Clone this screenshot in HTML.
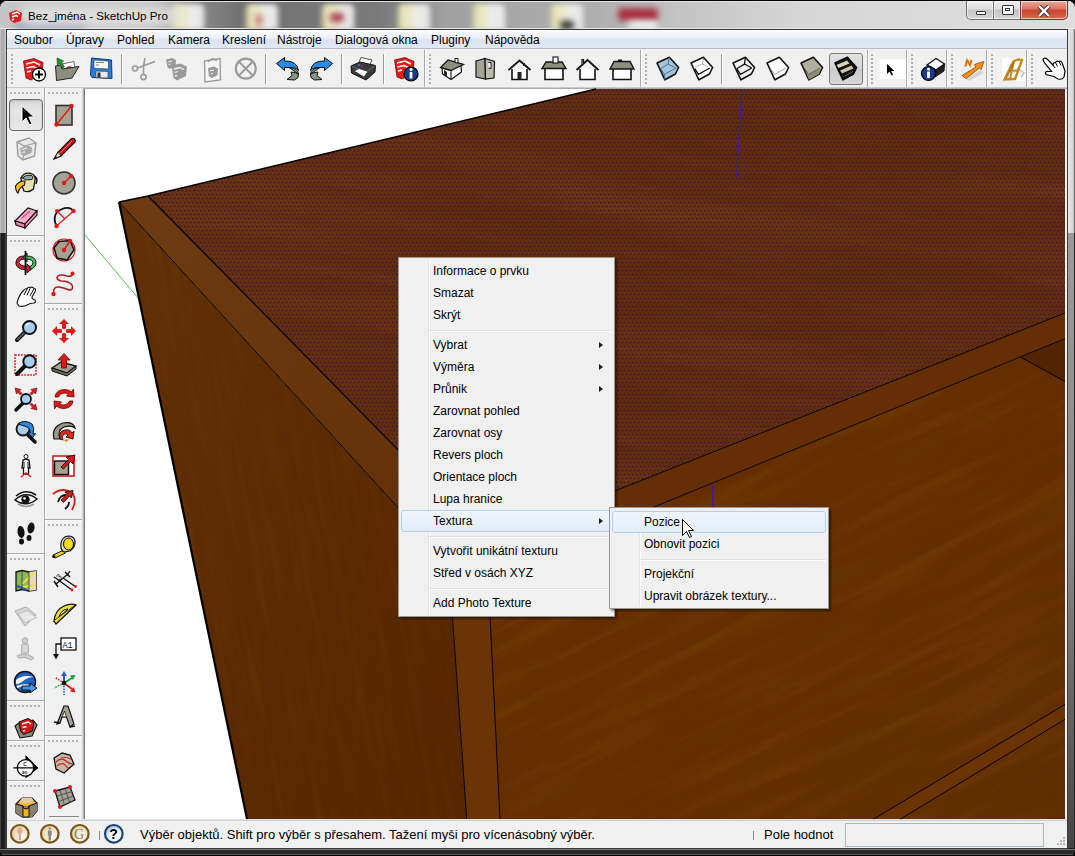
<!DOCTYPE html>
<html><head><meta charset="utf-8">
<style>
*{margin:0;padding:0;box-sizing:border-box}
html,body{width:1075px;height:856px;overflow:hidden;background:#000}
body{font-family:"Liberation Sans",sans-serif;font-size:12px;color:#000;position:relative}
.abs{position:absolute}
#frame{position:absolute;left:0;top:0;width:1075px;height:856px;border-radius:7px 7px 6px 6px;background:#2a2a2a;overflow:hidden}
#title{position:absolute;left:0;top:0;width:1075px;height:29px;overflow:hidden;border-radius:7px 7px 0 0;border-top:1px solid #000;background:linear-gradient(90deg,#c6c6c6 0,#bcbcbc 150px,#8a8a8a 195px,#727272 240px,#7a7a7a 380px,#a0a0a0 445px,#a8a8a8 520px,#b0b0b0 600px,#c4c4c4 680px,#d6d6d6 800px,#dedede 1075px)}
#client{position:absolute;left:6px;top:29px;width:1062px;height:820px;background:#f0f0f0;border:1px solid #3a3a3a}
#menubar{position:absolute;left:7px;top:30px;width:1060px;height:19px;
 background:linear-gradient(180deg,#fbfcfe 0,#eaeff8 45%,#dce4f2 55%,#dfe7f5 100%);border-bottom:1px solid #b6bcc6}
#menubar span{position:absolute;top:3px;font-size:12px;line-height:14px;color:#000}
#toolbar{position:absolute;left:7px;top:49px;width:1060px;height:39px;background:#f0f0f0;border-bottom:1px solid #c9c9c9}
#lefttb{position:absolute;left:7px;top:88px;width:77px;height:732px;background:#f0f0f0}
#view{position:absolute;left:83px;top:88px;width:984px;height:732px;background:#f0f0f0}
#status{position:absolute;left:7px;top:820px;width:1060px;height:28px;background:#f0f0f0;border-top:1px solid #d0d0d0}
.menu{position:absolute;background:#f0f0f0;border:1px solid #979797;box-shadow:2px 2px 2px rgba(0,0,0,.45)}
.menu .it{position:absolute;left:34px;font-size:12px;line-height:14px;color:#000;white-space:nowrap}
.menu .gut{position:absolute;top:2px;bottom:2px;width:2px;border-left:1px solid #e2e3e3;border-right:1px solid #fff}
.menu .sep{position:absolute;height:2px;border-top:1px solid #e0e0e0;border-bottom:1px solid #fff}
.menu .hl{position:absolute;height:22px;border:1px solid #aecff7;border-radius:3px;background:linear-gradient(180deg,#f1f5fb 0,#e3ecf8 100%)}
.arr{position:absolute;width:0;height:0;border-top:3.5px solid transparent;border-bottom:3.5px solid transparent;border-left:4px solid #1a1a1a}

.blob{position:absolute;top:3px;width:37px;height:26px;filter:blur(2.5px);background:linear-gradient(90deg,rgba(232,226,184,0) 0,#e8e2b8 18%,#ece8c8 40%,#ececec 60%,#e6e6e6 90%,rgba(230,230,230,0) 100%);border-radius:8px 8px 0 0}
.blob2{position:absolute;filter:blur(3px);border-radius:4px}
.glow{position:absolute;left:20px;top:4px;width:160px;height:22px;background:rgba(235,235,235,.7);filter:blur(6px);border-radius:10px}
#capbtns{position:absolute;left:966px;top:0px;width:102px;height:19px}
.cb{position:absolute;top:0;height:19px;border:1px solid #6e6e6e;border-top:none;background:linear-gradient(180deg,#efefef 0,#dcdcdc 45%,#c4c4c4 50%,#d6d6d6 100%);box-shadow:inset 0 0 0 1px rgba(255,255,255,.6)}
.cb.close{background:linear-gradient(180deg,#e9a99a 0,#d9735e 45%,#c8432a 50%,#d86a50 100%);border-color:#6e3a34}

.ic{position:absolute;overflow:visible}
.tend{position:absolute;top:1px;width:1px;height:37px;background:#a8a8a8;box-shadow:1px 0 0 #fff}
.grip{position:absolute;top:5px;width:2px;height:32px;background:repeating-linear-gradient(180deg,#b0b0b0 0,#b0b0b0 2px,transparent 2px,transparent 4px)}
.tsep{position:absolute;top:5px;width:1px;height:30px;background:#9a9a9a;box-shadow:1px 0 0 #fff}
.pressed{position:absolute;top:4px;width:34px;height:32px;border:1px solid #7a7a7a;border-radius:3px;background:linear-gradient(180deg,#e2e2e2 0,#d4d4d4 50%,#cacaca 51%,#d8d8d8 100%)}

.hgrip{position:absolute;width:32px;height:2px;background:repeating-linear-gradient(90deg,#b0b0b0 0,#b0b0b0 2px,transparent 2px,transparent 4px)}
.pline{position:absolute;height:1px;background:#a8a8a8;box-shadow:0 1px 0 #fff}
.selbtn{position:absolute;width:34px;height:32px;border:1px solid #6a6a6a;border-radius:4px;background:linear-gradient(180deg,#d8d8d8 0,#e6e6e6 40%,#e2e2e2 60%,#e8e8e8 100%);box-shadow:inset 0 1px 2px rgba(0,0,0,.15)}

.stt{position:absolute;top:6px;font-size:13px;line-height:15px;white-space:nowrap;color:#000}
</style></head><body>
<div id="frame">
 <div id="title">
  <div class="abs" style="left:0;top:0;width:1075px;height:1px;background:#e4e4e4"></div>
  <div class="abs" style="left:0;top:27px;width:1075px;height:1px;background:#e8e8e8"></div>
  <div class="blob" style="left:169px"></div>
  <div class="blob" style="left:243px"></div>
  <div class="blob" style="left:319px"></div>
  <div class="blob" style="left:395px"></div>
  <div class="blob" style="left:470px"></div>
  <div class="blob" style="left:548px"></div>
  <div class="blob2" style="left:256px;top:13px;width:6px;height:12px;background:#c07070"></div>
  <div class="blob2" style="left:330px;top:12px;width:14px;height:9px;background:#a83848"></div>
  <div class="blob2" style="left:560px;top:20px;width:14px;height:8px;background:#222"></div>
  <div class="blob2" style="left:618px;top:7px;width:40px;height:13px;background:#a83040"></div>
  <div class="blob2" style="left:628px;top:20px;width:30px;height:8px;background:#f4f4f4"></div>
  <div class="blob2" style="left:15px;top:20px;width:70px;height:10px;background:#7878a8;opacity:.45"></div>
  <div class="glow"></div>
  <svg class="abs" style="left:8px;top:8px" width="15" height="15" viewBox="0 0 15 15">
   <path d="M1 4 L8 1 L14 4 L13 12 L6 14 L2 11 Z" fill="#d42020"/>
   <path d="M4 5 L9 3 L12 5" stroke="#fff" stroke-width="1.4" fill="none"/>
   <path d="M4 8 L8 6.5 L10 7.5" stroke="#fff" stroke-width="1.4" fill="none"/>
   <path d="M4 11 L6 10" stroke="#fff" stroke-width="1.4" fill="none"/>
  </svg>
  <div class="abs" style="left:28px;top:8px;font-size:11.6px;line-height:14px;color:#000;white-space:nowrap">Bez_jména - SketchUp Pro</div>
  <div id="capbtns">
   <div class="cb" style="left:0;width:28px;border-radius:0 0 0 5px"><div style="position:absolute;left:9px;top:10px;width:10px;height:4px;border:1.5px solid #333;background:#fff;border-radius:1px"></div></div>
   <div class="cb" style="left:27px;width:28px"><div style="position:absolute;left:8px;top:4px;width:12px;height:10px;border:1.5px solid #333;background:#fff;border-radius:1px"><div style="position:absolute;left:2px;top:2px;width:5px;height:3px;border:1.2px solid #333"></div></div></div>
   <div class="cb close" style="left:54px;width:48px;border-radius:0 0 5px 0"><svg class="abs" style="left:16px;top:4px" width="14" height="12" viewBox="0 0 14 12"><path d="M2 1 L12 11 M12 1 L2 11" stroke="#333" stroke-width="4.2"/><path d="M2 1 L12 11 M12 1 L2 11" stroke="#fff" stroke-width="2.4"/></svg></div>
  </div>
 </div>
 <div class="abs" style="left:0;top:29px;width:6px;height:204px;background:linear-gradient(90deg,#d8d8d8 0,#a8a8a8 1px,#b4b4b4 5px,#dcdcdc 6px)"></div>
 <div class="abs" style="left:0;top:233px;width:6px;height:616px;background:linear-gradient(90deg,#6a6a6a 0,#1e1e1e 1px,#222 5px,#5a5a5a 6px)"></div>
 <div class="abs" style="left:1068px;top:29px;width:7px;height:204px;background:linear-gradient(90deg,#e6e6e6 0,#d6d6d6 5px,#b0b0b0 6px,#2a2a2a 7px)"></div>
 <div class="abs" style="left:1068px;top:233px;width:7px;height:616px;background:linear-gradient(180deg,#9a9a9a 0,#8a8a8a 300px,#444 616px)"></div>
 <div class="abs" style="left:1074px;top:233px;width:1px;height:616px;background:#222"></div>
 <div class="abs" style="left:0;top:848px;width:1075px;height:8px;background:linear-gradient(180deg,#1a1a1a 0,#1a1a1a 1px,#7a7a7a 1px,#7a7a7a 2px,#2a2a2a 2px,#2a2a2a 6px,#5a5a5a 6px,#5a5a5a 7px,#000 7px)"></div>
 <div id="client"></div>
 <div id="menubar">
  <span style="left:7px">Soubor</span>
  <span style="left:59px">Úpravy</span>
  <span style="left:110px">Pohled</span>
  <span style="left:161px">Kamera</span>
  <span style="left:215px">Kreslení</span>
  <span style="left:270px">Nástroje</span>
  <span style="left:328px">Dialogová okna</span>
  <span style="left:424px">Pluginy</span>
  <span style="left:478px">Nápověda</span>
 </div>
 <div id="toolbar">
  <!-- toolbar band borders -->
  <div class="tend" style="left:417px"></div>
  <div class="tend" style="left:633px"></div>
  <div class="tend" style="left:860px"></div>
  <div class="tend" style="left:899px"></div>
  <div class="tend" style="left:939px"></div>
  <div class="tend" style="left:979px"></div>
  <div class="tend" style="left:1019px"></div>
  <div class="grip" style="left:4px"></div>
  <div class="grip" style="left:422px"></div>
  <div class="grip" style="left:638px"></div>
  <div class="grip" style="left:864px"></div>
  <div class="grip" style="left:904px"></div>
  <div class="grip" style="left:944px"></div>
  <div class="grip" style="left:984px"></div>
  <div class="grip" style="left:1024px"></div>
  <div class="tsep" style="left:114px"></div>
  <div class="tsep" style="left:258px"></div>
  <div class="tsep" style="left:334px"></div>
  <div class="tsep" style="left:376px"></div>
  <div class="tsep" style="left:714px"></div>
  <div class="pressed" style="left:822px"></div>
 </div>
 <!-- toolbar icons, page coordinates -->
 <!-- New -->
 <svg class="ic" style="left:22px;top:57px" width="25" height="25" viewBox="0 0 25 25">
  <path d="M1.5 4 L12 1.5 L21 5.5 L20 17 L9 23 L4 21 Z" fill="#e41c1c" stroke="#7a0a0a" stroke-width=".8"/>
  <path d="M4 7 L12 5 L18 8 M4.5 11 L11 9.5 L15 11.5 M5 15 L9 14" stroke="#fff" stroke-width="1.6" fill="none"/>
  <circle cx="17" cy="17.5" r="6.5" fill="#fff" stroke="#000" stroke-width="1.3"/>
  <path d="M17 13.5 V21.5 M13 17.5 H21" stroke="#000" stroke-width="2"/>
 </svg>
 <!-- Open -->
 <svg class="ic" style="left:54px;top:57px" width="27" height="25" viewBox="0 0 27 25">
  <path d="M8 7 L20 4.5 L21.5 16 L9 19 Z" fill="#fff" stroke="#444" stroke-width=".8"/>
  <path d="M12 12 Q15 9 18 11" stroke="#d42020" stroke-width="2" fill="none"/>
  <path d="M1.5 9 L7 8 L8 12 L25 9.5 L18 21 L2.5 23.5 Z" fill="#8e8e80" stroke="#222" stroke-width="1"/>
  <path d="M3 1 L9.5 4 L7.5 5.5 L10.5 10 L8 11 L5.5 6.5 L3.5 8 Z" fill="#1a9a2a" stroke="#0a3a0a" stroke-width=".6"/>
 </svg>
 <!-- Save -->
 <svg class="ic" style="left:89px;top:56px" width="25" height="25" viewBox="0 0 25 25">
  <path d="M2.5 2 L22.5 4 L23 22.5 L3 21.5 L1.5 19 Z" fill="#2a7ad8" stroke="#0a3a8a" stroke-width="1"/>
  <path d="M5 4 L19.5 5.2 L19.3 13 L5 12.2 Z" fill="#fff" stroke="#333" stroke-width=".6"/>
  <path d="M7 6.5 H15 M7 9 H10" stroke="#555" stroke-width=".8"/>
  <path d="M7 15 L19 15.5 L19 22 L7 21.5 Z" fill="#e8e8e8" stroke="#333" stroke-width=".6"/>
  <rect x="8.5" y="16.5" width="3" height="5" fill="#333"/>
 </svg>
 <!-- Cut (disabled) -->
 <svg class="ic" style="left:131px;top:57px" width="26" height="25" viewBox="0 0 26 25">
  <g stroke="#9a9a9a" fill="none" stroke-width="1.6">
   <circle cx="4" cy="11.5" r="2.5"/><circle cx="12.5" cy="20" r="2.6"/>
   <path d="M6.5 11 L24 4.5 M12.5 17.5 L12.5 9 L14 1"/>
  </g>
 </svg>
 <!-- Copy (disabled) -->
 <svg class="ic" style="left:165px;top:57px" width="25" height="25" viewBox="0 0 25 25">
  <path d="M1 2.5 L7 1 L11 3 L10.5 9 L5 12 L2.5 10.5 Z" fill="#9a9a9a"/>
  <path d="M6.5 8.5 L15 6.5 L22 9.5 L21 19 L12 23.5 L8.5 21 Z" fill="#9a9a9a"/>
  <path d="M9 12 L15 10.5 L19 12.5 M9.5 15.5 L13 14.5 M10 19 L12 18.5" stroke="#f0f0f0" stroke-width="1.3" fill="none"/>
  <path d="M3 5 L7 4 M3.5 7.5 L5.5 7" stroke="#f0f0f0" stroke-width="1" fill="none"/>
 </svg>
 <!-- Paste (disabled) -->
 <svg class="ic" style="left:203px;top:57px" width="19" height="26" viewBox="0 0 19 26">
  <path d="M1.5 4 L17 1.5 L17.5 23 L2 25 Z" fill="#f6f6f6" stroke="#9a9a9a" stroke-width="1.4"/>
  <path d="M5 5 L9.5 1.5 L14 4" stroke="#9a9a9a" stroke-width="1.2" fill="none"/>
  <path d="M5 11 L11 9.5 L15 11.5 L14.5 18 L9 21 L6 19.5 Z" fill="#9a9a9a"/>
  <path d="M7 14 L11 13 M7.5 17 L10 16.5" stroke="#f0f0f0" stroke-width="1.1"/>
 </svg>
 <!-- Erase (disabled) -->
 <svg class="ic" style="left:234px;top:57px" width="24" height="24" viewBox="0 0 24 24">
  <circle cx="11.8" cy="11.6" r="10" fill="none" stroke="#9a9a9a" stroke-width="2.2"/>
  <path d="M5 4.8 L18.6 18.4 M18.6 4.8 L5 18.4" stroke="#9a9a9a" stroke-width="2"/>
 </svg>
 <!-- Undo -->
 <svg class="ic" style="left:275px;top:56px" width="27" height="26" viewBox="0 0 27 26">
  <path d="M14 11.5 Q23 12 23.5 18 Q21 16.5 16 16 L17 19.5 L12 23.5 L19.5 24 Q24.5 22 23.5 18 Z" fill="#8a9a80" stroke="#111" stroke-width="1"/>
  <path d="M1.5 7.5 L9.5 1.5 L9.5 5 Q22 4.5 23.5 14.5 Q22 11.5 14.5 11.5 L9.5 11.5 L9.5 14.5 Z" fill="#2a8ae0" stroke="#111" stroke-width="1"/>
 </svg>
 <!-- Redo -->
 <svg class="ic" style="left:308px;top:56px" width="27" height="26" viewBox="0 0 27 26">
  <g transform="translate(26 0) scale(-1 1)">
  <path d="M14 11.5 Q23 12 23.5 18 Q21 16.5 16 16 L17 19.5 L12 23.5 L19.5 24 Q24.5 22 23.5 18 Z" fill="#8a9a80" stroke="#111" stroke-width="1"/>
  <path d="M1.5 7.5 L9.5 1.5 L9.5 5 Q22 4.5 23.5 14.5 Q22 11.5 14.5 11.5 L9.5 11.5 L9.5 14.5 Z" fill="#2a8ae0" stroke="#111" stroke-width="1"/>
  </g>
 </svg>
 <!-- Print -->
 <svg class="ic" style="left:350px;top:56px" width="27" height="25" viewBox="0 0 27 25">
  <path d="M11 1.5 L22 4 L19 11 L8 8.5 Z" fill="#fff" stroke="#222" stroke-width=".8"/>
  <path d="M1 10 L10 6 L25.5 9.5 L25 16 L16 24 L1.5 17 Z" fill="#3a3a3a" stroke="#111" stroke-width="1"/>
  <path d="M1.5 10.5 L16 16 L25.5 9.5" stroke="#6a6a6a" stroke-width="1" fill="none"/>
  <path d="M4 15 L9 12.5 L18 15.5 L14 21 Z" fill="#fff" stroke="#222" stroke-width=".7"/>
  <circle cx="9" cy="9" r="1.3" fill="#2a6ad0"/><circle cx="12" cy="9.8" r=".9" fill="#d02020"/>
 </svg>
 <!-- Model info -->
 <svg class="ic" style="left:393px;top:56px" width="26" height="26" viewBox="0 0 26 26">
  <path d="M1.5 4 L12 1.5 L21 5.5 L20 17 L9 23 L4 21 Z" fill="#e41c1c" stroke="#7a0a0a" stroke-width=".8"/>
  <path d="M4 7 L12 5 L18 8 M4.5 11 L11 9.5 L15 11.5 M5 15 L9 14" stroke="#fff" stroke-width="1.6" fill="none"/>
  <circle cx="18" cy="18" r="7" fill="#1a3a8a" stroke="#000" stroke-width="1.2"/>
  <rect x="16.6" y="16" width="2.8" height="6.5" fill="#fff"/><circle cx="18" cy="13.5" r="1.5" fill="#fff"/>
 </svg>
 <!-- Iso -->
 <svg class="ic" style="left:439px;top:57px" width="26" height="24" viewBox="0 0 26 24">
  <path d="M3 11 L3.5 17 L12 22.5 L22.5 15 L22 9" fill="#fff" stroke="#111" stroke-width="1.2"/>
  <path d="M1.5 10.5 L9 3 L24.5 7.5 L12 13.5 Z" fill="#8e8e7e" stroke="#111" stroke-width="1.2"/>
  <path d="M1.5 10.5 L12 13.5 L12 22.5" fill="none" stroke="#111" stroke-width="1.1"/>
  <path d="M16 1.5 L19 1.5 L19 6 L16 5.5 Z" fill="#fff" stroke="#111"/>
  <path d="M5 13 L5 18 L8 19.5 L8 15 Z" fill="#222"/>
 </svg>
 <!-- Top -->
 <svg class="ic" style="left:474px;top:57px" width="23" height="24" viewBox="0 0 23 24">
  <path d="M2 4 L11 1.5 L11.5 22 L2 20 Z" fill="#a4a494" stroke="#111" stroke-width="1.2"/>
  <path d="M11 1.5 L20.5 4.5 L20 21 L11.5 22 Z" fill="#bcbcac" stroke="#111" stroke-width="1.2"/>
  <path d="M14.5 5.5 L17 5.5 L17 11.5 L14.5 11" fill="#fff" stroke="#111"/>
 </svg>
 <!-- Front -->
 <svg class="ic" style="left:507px;top:59px" width="25" height="22" viewBox="0 0 25 22">
  <path d="M5 10 L5 20.5 L20 20.5 L20 10" fill="#fff" stroke="#111" stroke-width="1.6"/>
  <path d="M1.5 11 L12.5 1.5 L23.5 11" fill="none" stroke="#111" stroke-width="1.8"/>
  <path d="M17 4 L17 7" stroke="#111" stroke-width="1.6"/>
  <rect x="10.5" y="13" width="4" height="7.5" fill="#222"/>
 </svg>
 <!-- Right -->
 <svg class="ic" style="left:541px;top:56px" width="26" height="25" viewBox="0 0 26 25">
  <path d="M4 12 L4 23.5 L22 23.5 L22 12" fill="#fff" stroke="#111" stroke-width="1.6"/>
  <path d="M1 12.5 L5 6 L21 6 L25 12.5 Z" fill="#8e8e7e" stroke="#111" stroke-width="1.4"/>
  <rect x="12" y="1" width="5" height="6" fill="#fff" stroke="#111" stroke-width="1.1"/>
 </svg>
 <!-- Back -->
 <svg class="ic" style="left:575px;top:58px" width="25" height="23" viewBox="0 0 25 23">
  <path d="M5 11 L5 21.5 L20 21.5 L20 11" fill="#fff" stroke="#111" stroke-width="1.6"/>
  <path d="M1.5 12 L12.5 2 L23.5 12" fill="none" stroke="#111" stroke-width="1.8"/>
  <path d="M7 6 L7 1.5 L8.5 1.5 L8.5 5" stroke="#111" stroke-width="1.2" fill="#fff"/>
 </svg>
 <!-- Left -->
 <svg class="ic" style="left:609px;top:58px" width="26" height="23" viewBox="0 0 26 23">
  <path d="M4 10.5 L4 21.5 L22 21.5 L22 10.5" fill="#fff" stroke="#111" stroke-width="1.6"/>
  <path d="M1 11 L5 3.5 L21 3.5 L25 11 Z" fill="#8e8e7e" stroke="#111" stroke-width="1.4"/>
  <rect x="9" y="1.5" width="4" height="2.5" fill="#111"/>
 </svg>
 <svg class="ic" style="left:654px;top:54px" width="28" height="28" viewBox="0 0 28 28"><path d="M3,9 15.4,3.3 24.6,13.5 21.4,20 10.9,25.8 Z" fill="#a4c4dc" stroke="#111" stroke-width="1.6" stroke-linejoin="round"/><path d="M6.7,14.7 10.5,20.4 21.8,14 M10.5,20.4 L10.9,25.8 M15.4,3.3 L14,10 L6.7,14.7 M14,10 L21.8,14" fill="none" stroke="#4a6a88" stroke-width=".9"/></svg>
 <svg class="ic" style="left:688px;top:54px" width="28" height="28" viewBox="0 0 28 28"><path d="M3,9 15.4,3.3 24.6,13.5 21.4,20 10.9,25.8 Z" fill="#fff" stroke="#111" stroke-width="1.6" stroke-linejoin="round"/><path d="M6.7,14.7 10.5,20.4 21.8,14" fill="none" stroke="#111" stroke-width="1.3"/><path d="M15.4,5 L14.5,10 L7,13 M14.5,10 L20,13" fill="none" stroke="#666" stroke-width=".9" stroke-dasharray="1.2 1.1"/></svg>
 <svg class="ic" style="left:730px;top:54px" width="28" height="28" viewBox="0 0 28 28"><path d="M3,9 15.4,3.3 24.6,13.5 21.4,20 10.9,25.8 Z" fill="none" stroke="#111" stroke-width="1.6" stroke-linejoin="round"/><path d="M6.7,14.7 10.5,20.4 21.8,14 M15.4,3.3 L14.5,10 L6.7,14.7 M14.5,10 L21.8,14" fill="none" stroke="#111" stroke-width="1.3"/></svg>
 <svg class="ic" style="left:764px;top:54px" width="28" height="28" viewBox="0 0 28 28"><path d="M3,9 15.4,3.3 24.6,13.5 21.4,20 10.9,25.8 Z" fill="#fff" stroke="#111" stroke-width="1.6" stroke-linejoin="round"/><path d="M6.7,14.7 10.5,20.4 21.8,14" fill="none" stroke="#999" stroke-width=".9"/></svg>
 <svg class="ic" style="left:798px;top:54px" width="28" height="28" viewBox="0 0 28 28"><path d="M3,9 15.4,3.3 24.6,13.5 21.4,20 10.9,25.8 Z" fill="#b0ae9c" stroke="#111" stroke-width="1.6" stroke-linejoin="round"/><path d="M6.7,14.7 10.5,20.4 21.8,14 21.4,20 10.9,25.8 Z" fill="#8c8a78"/><path d="M6.7,14.7 10.5,20.4 21.8,14" fill="none" stroke="#555" stroke-width=".8"/></svg>
 <svg class="ic" style="left:832px;top:54px" width="28" height="28" viewBox="0 0 28 28"><path d="M3,9 15.4,3.3 24.6,13.5 21.4,20 10.9,25.8 Z" fill="#111" stroke="#000" stroke-width="1.6" stroke-linejoin="round"/><path d="M4.5,11 L15,6.5 L17.5,9.5 L6.5,14 Z" fill="#d8d4b4"/><path d="M8,16.5 L19.5,11.5 L21.5,14.5 L10,19.5 Z" fill="#c8c4a4"/><path d="M11.5,22.5 L21,17.5" stroke="#777" stroke-width=".8"/></svg>
 <!-- select box -->
 <div class="abs" style="left:880px;top:59px;width:26px;height:20px;background:#fff"></div>
 <svg class="ic" style="left:886px;top:63px" width="10" height="13" viewBox="0 0 10 13">
  <path d="M1 1 L1 11 L3.5 8.5 L5.5 12.5 L7 11.8 L5 8 L8.5 8 Z" fill="#000"/>
 </svg>
 <!-- info box -->
 <svg class="ic" style="left:920px;top:56px" width="26" height="26" viewBox="0 0 26 26">
  <path d="M7 9 L16 2.5 L24.5 8 L16 14 Z" fill="#fff" stroke="#111" stroke-width="1.3"/>
  <path d="M16 14 L24.5 8 L24 15 L15 21 Z" fill="#222" stroke="#111"/>
  <path d="M7 9 L16 14 L15 21" fill="none" stroke="#111" stroke-width="1.1"/>
  <circle cx="8.5" cy="17.5" r="7" fill="#1a3a8a" stroke="#000" stroke-width="1.2"/>
  <rect x="7.1" y="15.5" width="2.8" height="6.5" fill="#fff"/><circle cx="8.5" cy="13" r="1.5" fill="#fff"/>
 </svg>
 <!-- north arrow -->
 <svg class="ic" style="left:961px;top:59px" width="25" height="22" viewBox="0 0 25 22">
  <path d="M3 17.5 L19 8.5 L21 12 L7 20 Z" fill="#c8c8c8" opacity=".7" transform="translate(1.5 2)"/>
  <path d="M1 16.5 L15 8 L13.5 5.5 L23 2.5 L20 10.5 L18.5 9 L5 19.5 Z" fill="#f6901e" stroke="#a85808" stroke-width="1"/>
  <path d="M4.5 7.5 L6 1.5 L9 6 L10.5 1" fill="none" stroke="#f6901e" stroke-width="2.4"/>
  <path d="M4.5 7.5 L6 1.5 L9 6 L10.5 1" fill="none" stroke="#a85808" stroke-width=".6"/>
 </svg>
 <!-- window -->
 <div class="abs" style="left:1002px;top:58px;width:23px;height:23px;background:#fff"></div>
 <svg class="ic" style="left:1003px;top:58px" width="23" height="23" viewBox="0 0 23 23">
  <path d="M14 10 L21 15 L18 19" fill="none" stroke="#c8c8c8" stroke-width="1.6"/>
  <path d="M1.5 21.5 L10 4 Q14 0.5 19 2 L12 21 Z" fill="none" stroke="#c8881a" stroke-width="2.4"/>
  <path d="M5 13 L15.5 12.5 M11 3 L7 21" stroke="#c8881a" stroke-width="2"/>
  <path d="M3 20.5 L10.5 5 M4.5 20 L11 4.5" stroke="#7a5010" stroke-width=".5"/>
 </svg>
 <!-- hand -->
 <svg class="ic" style="left:1041px;top:56px" width="25" height="25" viewBox="0 0 25 25">
  <path d="M2 3.5 Q3.5 1 6 3 L12 9 Q12 6.5 14.5 6.5 Q15.5 4.5 18 5.5 Q19.5 4.5 21 6.5 L24 15 L23 21 Q21 24 17 23 L13 20.5 L6.5 19 Q4 18.5 4.5 16.5 Q5 15 7 15.5 L10.5 15.5 L3 6 Z" fill="#fff" stroke="#000" stroke-width="1.2"/>
  <path d="M12 9 L14 12 M14.5 6.5 L16.5 10.5 M18 5.5 L20 9.5" stroke="#000" stroke-width="1" fill="none"/>
 </svg>
 <div id="lefttb">
  <div class="abs" style="left:37px;top:0;width:1px;height:732px;background:#a8a8a8;box-shadow:1px 0 0 #fff"></div>
  <div class="hgrip" style="left:3px;top:4px"></div>
  <div class="hgrip" style="left:41px;top:4px"></div>
  <div class="pline" style="left:0;top:147px;width:37px"></div>
  <div class="hgrip" style="left:3px;top:152px"></div>
  <div class="pline" style="left:0;top:465px;width:37px"></div>
  <div class="hgrip" style="left:3px;top:470px"></div>
  <div class="pline" style="left:0;top:612px;width:37px"></div>
  <div class="hgrip" style="left:3px;top:617px"></div>
  <div class="pline" style="left:0;top:652px;width:37px"></div>
  <div class="hgrip" style="left:3px;top:657px"></div>
  <div class="pline" style="left:0;top:692px;width:37px"></div>
  <div class="hgrip" style="left:3px;top:697px"></div>
  <div class="pline" style="left:38px;top:215px;width:38px"></div>
  <div class="hgrip" style="left:41px;top:220px"></div>
  <div class="pline" style="left:38px;top:431px;width:38px"></div>
  <div class="hgrip" style="left:41px;top:436px"></div>
  <div class="pline" style="left:38px;top:647px;width:38px"></div>
  <div class="hgrip" style="left:41px;top:652px"></div>
  <div class="abs" style="left:42px;top:728px;width:30px;height:1px;background:#8a8a8a"></div>
  <div class="abs" style="left:75px;top:0;width:1px;height:732px;background:#d8d8d8"></div>
  <div class="selbtn" style="left:2px;top:11px"></div>
 </div>
 <div id="view">
  <svg width="984" height="732" viewBox="83 88 984 732" style="position:absolute;left:0;top:0">
   <defs>
    <pattern id="dots" x="0" y="0" width="4" height="8" patternUnits="userSpaceOnUse">
     <circle cx="0.5" cy="2.5" r="1.6" fill="#56243e" opacity=".55"/>
     <circle cx="4.5" cy="2.5" r="1.6" fill="#56243e" opacity=".55"/>
     <circle cx="2.5" cy="6.5" r="1.6" fill="#56243e" opacity=".55"/>
     <rect x="0" y="2" width="1" height="1" fill="#380a24"/>
     <rect x="2" y="6" width="1" height="1" fill="#380a24"/>
    </pattern>
    <filter id="grainV">
     <feTurbulence type="fractalNoise" baseFrequency="0.12 0.008" numOctaves="3" seed="7"/>
     <feColorMatrix type="matrix" values="0 0 0 0 0.5  0 0 0 0 0.24  0 0 0 0 0.02  2.4 0 0 0 -1.1"/>
    </filter>
    <filter id="grainVd">
     <feTurbulence type="fractalNoise" baseFrequency="0.1 0.01" numOctaves="2" seed="17"/>
     <feColorMatrix type="matrix" values="0 0 0 0 0.15  0 0 0 0 0.05  0 0 0 0 0  2.4 0 0 0 -1.1"/>
    </filter>
    <filter id="grainH">
     <feTurbulence type="fractalNoise" baseFrequency="0.006 0.07" numOctaves="3" seed="11"/>
     <feColorMatrix type="matrix" values="0 0 0 0 0.5  0 0 0 0 0.24  0 0 0 0 0.02  2.4 0 0 0 -1.1"/>
    </filter>
    <filter id="grainHd">
     <feTurbulence type="fractalNoise" baseFrequency="0.008 0.06" numOctaves="2" seed="23"/>
     <feColorMatrix type="matrix" values="0 0 0 0 0.15  0 0 0 0 0.05  0 0 0 0 0  2.4 0 0 0 -1.1"/>
    </filter>
    <filter id="bandT">
     <feTurbulence type="fractalNoise" baseFrequency="0.0025 0.022" numOctaves="3" seed="5"/>
     <feColorMatrix type="matrix" values="0 0 0 0 0.12  0 0 0 0 0.03  0 0 0 0 0  3 0 0 0 -1.3"/>
    </filter>
    <filter id="bandL">
     <feTurbulence type="fractalNoise" baseFrequency="0.0025 0.022" numOctaves="3" seed="9"/>
     <feColorMatrix type="matrix" values="0 0 0 0 0.62  0 0 0 0 0.3  0 0 0 0 0.05  -3 0 0 0 1.6"/>
    </filter>
    <clipPath id="cSide"><polygon points="119,202 448.6,562.9 466.7,819 247,819"/></clipPath>
    <clipPath id="cTop"><polygon points="148,196 596,89 1065,89 1065,313 488,541"/></clipPath>
    <clipPath id="cInt"><polygon points="488,575 1065,338.6 1065,819 500,819"/></clipPath>
    <clipPath id="cStrip"><polygon points="119,202 148,196 488,541 500,819 466.7,819 448.6,562.9"/></clipPath>
    <linearGradient id="gTop" gradientUnits="userSpaceOnUse" x1="150" y1="190" x2="1000" y2="400">
     <stop offset="0" stop-color="#66320e"/><stop offset=".35" stop-color="#602c0c"/><stop offset="1" stop-color="#602c0c"/>
    </linearGradient>
    <linearGradient id="gStrip" gradientUnits="userSpaceOnUse" x1="130" y1="200" x2="460" y2="560">
     <stop offset="0" stop-color="#6e3a12"/><stop offset="1" stop-color="#623008"/>
    </linearGradient>
    <linearGradient id="gSide" x1="0" y1="0" x2="1" y2="1">
     <stop offset="0" stop-color="#623008"/><stop offset=".6" stop-color="#5a2a04"/><stop offset="1" stop-color="#562602"/>
    </linearGradient>
    <linearGradient id="gInt" x1="0" y1="0" x2="1" y2="1">
     <stop offset="0" stop-color="#683002"/><stop offset="1" stop-color="#602c02"/>
    </linearGradient>
   </defs>
   <rect x="83" y="88" width="984" height="732" fill="#f0f0f0"/>
   <rect x="83" y="88" width="1" height="732" fill="#b4b4b4"/>
   <rect x="84" y="88" width="1" height="732" fill="#7a7a7a"/>
   <rect x="83" y="88" width="984" height="1" fill="#a8a8a8"/>
   <rect x="85" y="89" width="980" height="730" fill="#fff"/>
   <rect x="83" y="819" width="984" height="1" fill="#e4e4e4"/>
   <line x1="84.7" y1="234.7" x2="138.4" y2="298.3" stroke="#5cb85c" stroke-width="1"/>
   <!-- outer side face -->
   <polygon points="119,202 448.6,562.9 466.7,819 247,819" fill="url(#gSide)"/>
   <g clip-path="url(#cSide)"><rect x="60" y="150" width="500" height="740" fill="#000" filter="url(#grainV)" transform="rotate(-10 300 500)" opacity=".06"/><rect x="60" y="150" width="500" height="740" fill="#000" filter="url(#grainVd)" transform="rotate(-10 300 500)" opacity=".25"/></g>
   <!-- strip -->
   <polygon points="119,202 148,196 488,541 500,819 466.7,819 448.6,562.9" fill="url(#gStrip)"/>
   <polygon points="448.6,562.9 488,570 500,819 466.7,819" fill="#6a3404"/>
   <!-- top face -->
   <polygon points="148,196 596,89 1065,89 1065,313 488,541" fill="url(#gTop)"/>
   <g clip-path="url(#cTop)"><rect x="50" y="0" width="1100" height="650" fill="#000" filter="url(#grainH)" transform="rotate(7 600 300)" opacity=".08"/><rect x="50" y="0" width="1100" height="650" fill="#000" filter="url(#grainHd)" transform="rotate(7 600 300)" opacity=".25"/><rect x="50" y="0" width="1100" height="650" fill="#000" filter="url(#bandT)" transform="rotate(7 600 300)" opacity=".4"/><rect x="50" y="0" width="1100" height="650" fill="#000" filter="url(#bandL)" transform="rotate(7 600 300)" opacity=".07"/></g>
   <polygon points="148,196 596,89 1065,89 1065,313 488,541" fill="url(#dots)"/>
   <!-- front strip -->
   <polygon points="488,541 1065,313 1065,338.6 488,575" fill="#662e04"/>
   <!-- interior -->
   <polygon points="488,575 1065,338.6 1065,819 500,819" fill="url(#gInt)"/>
   <g clip-path="url(#cInt)"><rect x="300" y="100" width="1000" height="1000" fill="#000" filter="url(#grainH)" transform="rotate(-26 780 580)" opacity=".12"/><rect x="300" y="100" width="1000" height="1000" fill="#000" filter="url(#grainHd)" transform="rotate(-26 780 580)" opacity=".22"/></g>
   <polygon points="1020.5,357 1065,338.6 1065,381.5" fill="#522402"/>
   <polygon points="873.7,819 1065,704.5 1065,719.3 900.6,819" fill="#6a3404"/>
   <g stroke="#000" fill="none" stroke-width="1">
    <polyline points="247,819 119,202" stroke-width="2.2"/>
    <polyline points="119,202 148,196 596,89" stroke-width="1.4"/>
    <line x1="119" y1="202" x2="448.6" y2="562.9"/>
    <line x1="148" y1="196" x2="488" y2="541" stroke-width="1.3"/>
    <line x1="448.6" y1="562.9" x2="466.7" y2="819"/>
    <line x1="488" y1="575" x2="500" y2="819"/>
    <line x1="488" y1="541" x2="1065" y2="313"/>
    <line x1="488" y1="575" x2="1065" y2="338.6"/>
    <line x1="1020.5" y1="357" x2="1065" y2="381.5"/>
    <line x1="873.7" y1="819" x2="1065" y2="704.5"/>
    <line x1="900.6" y1="819" x2="1065" y2="719.3"/>
   </g>
   <line x1="742" y1="89" x2="736.5" y2="177" stroke="#3a1ab0" stroke-width="1.2"/>
   <line x1="712.7" y1="485" x2="712.7" y2="508" stroke="#3a1ab0" stroke-width="1.2"/>
  </svg>
 </div>
 <svg class="ic" style="left:13.0px;top:102.0px" width="26" height="26" viewBox="0 0 26 26"><path d="M9 4 L9 20 L13 16 L16.5 23 L19 21.8 L15.8 15 L21 15 Z" fill="#000" stroke="#fff" stroke-width="1" stroke-linejoin="round"/></svg>
 <svg class="ic" style="left:13.0px;top:136.0px" width="26" height="26" viewBox="0 0 26 26"><path d="M4 6 L16 2 L23 7 L21.5 20 L10 24 L5 20 Z" fill="#e8e8e8" stroke="#9a9a9a" stroke-width="1.4"/><path d="M4 6 L11 10 L23 7 M11 10 L10 24" stroke="#9a9a9a" stroke-width="1.1" fill="none"/><path d="M7 12 L15 9.5 L19 11.5 L18.5 17 L11 20 L8 18 Z" fill="#aaa"/><path d="M9 13.5 L14 12 M9.5 16.5 L12 15.8" stroke="#eee" stroke-width="1.2"/></svg>
 <svg class="ic" style="left:13.0px;top:169.5px" width="26" height="26" viewBox="0 0 26 26"><path d="M8 8 Q11 2 18 3.5 Q23 5 22 10 L20.5 19 Q16 23 11 21 L9 16 Z" fill="#e8e0b0" stroke="#111" stroke-width="1.3"/><path d="M9 8 Q13 4 19 5.5 Q21 7 19 9.5 Q13 11 9 8 Z" fill="#88a8a8" stroke="#111" stroke-width=".9"/><path d="M21 6 Q25.5 8 23 14" fill="none" stroke="#111" stroke-width="1.4"/><path d="M12 11 Q6 10.5 2.5 16 Q2.5 21 5 23 Q6.5 17 11.5 15 Z" fill="#f2c020" stroke="#111" stroke-width="1.1"/></svg>
 <svg class="ic" style="left:13.0px;top:203.5px" width="26" height="26" viewBox="0 0 26 26"><path d="M2 17 L15 4 L24 7 L12 20 Z" fill="#f8a8c8" stroke="#111" stroke-width="1.2"/><path d="M2 17 L3 21 L12 24 L12 20 Z" fill="#f080a8" stroke="#111" stroke-width="1.1"/><path d="M12 24 L24 11 L24 7 L12 20 Z" fill="#e890b0" stroke="#111" stroke-width="1.1"/><path d="M9 14 L17 7" stroke="#a03060" stroke-width="1.5" stroke-dasharray="1 .8"/></svg>
 <svg class="ic" style="left:13.0px;top:250.0px" width="26" height="26" viewBox="0 0 26 26"><path d="M3 12 Q4 6 11 6 L11 9 Q6 9.5 6 12.5 Q7 16 14 16.5 L14 14 L19 18.5 L14 23 L14 20 Q4 19.5 3 14 Z" fill="#d82030" stroke="#111" stroke-width="1"/><path d="M14 6 Q22 6 23 12 Q23 18 17 19.5 L17 16.5 Q20 15.5 20 12.5 Q19.5 9.5 14 9 L14 12 L10 7.5 L14 3 Z" fill="#40c060" stroke="#111" stroke-width="1"/><path d="M12.5 1 L12.5 25" stroke="#111" stroke-width="1.8"/></svg>
 <svg class="ic" style="left:13.0px;top:283.0px" width="26" height="26" viewBox="0 0 26 26"><path d="M4 20 Q6 12 10 8 Q12 5 14 6 Q15 3.5 17.5 4.5 Q19.5 3.5 21 5.5 Q23 5.5 22.5 8 L19 14 Q18.5 16 22 17 Q23.5 19 21 20 Q17 20 14 22 Q10 24 6 23 Z" fill="#fff" stroke="#111" stroke-width="1.1"/><path d="M11 12 L14 6 M14 12.5 L17.5 4.5 M17 13 L21 5.5" stroke="#111" stroke-width="1" fill="none"/></svg>
 <svg class="ic" style="left:13.0px;top:317.5px" width="26" height="26" viewBox="0 0 26 26"><path d="M4 22 L12 14" stroke="#111" stroke-width="4" stroke-linecap="round"/><path d="M4.5 21.5 L11.5 14.5" stroke="#555" stroke-width="1.8" stroke-linecap="round"/><circle cx="16.5" cy="9.5" r="6.5" fill="#a8ccec" stroke="#111" stroke-width="2"/><path d="M13 8 Q14 5.5 17 5.5" stroke="#fff" stroke-width="1.2" fill="none"/></svg>
 <svg class="ic" style="left:13.0px;top:351.5px" width="26" height="26" viewBox="0 0 26 26"><rect x="2" y="3" width="21" height="20" fill="none" stroke="#e02020" stroke-width="1.6" stroke-dasharray="1.8 1.2"/><path d="M4 22 L12 14" stroke="#111" stroke-width="4" stroke-linecap="round"/><circle cx="16.5" cy="9.5" r="6.2" fill="#a8ccec" stroke="#111" stroke-width="2"/></svg>
 <svg class="ic" style="left:13.0px;top:385.7px" width="26" height="26" viewBox="0 0 26 26"><path d="M3 24 L10 17" stroke="#111" stroke-width="3.5" stroke-linecap="round"/><circle cx="13" cy="13" r="5" fill="#a8ccec" stroke="#111" stroke-width="1.8"/><path d="M2 2 L8 3.5 L6.5 5 L9 7.5 L7.5 9 L5 6.5 L3.5 8 Z M24 2 L22.5 8 L21 6.5 L18.5 9 L17 7.5 L19.5 5 L18 3.5 Z M24 24 L18 22.5 L19.5 21 L17 18.5 L18.5 17 L21 19.5 L22.5 18 Z" fill="#d82020" stroke="#600" stroke-width=".6"/></svg>
 <svg class="ic" style="left:13.0px;top:419.3px" width="26" height="26" viewBox="0 0 26 26"><circle cx="10" cy="10" r="6.5" fill="#a8ccec" stroke="#111" stroke-width="1.8"/><path d="M5 5 Q12 0 19 5 Q22 9 20 15 L22.5 14.5 L18 21 L14.5 13.5 L17 14 Q17.5 9 13 7.5 Z" fill="#2a88e0" stroke="#111" stroke-width="1"/><path d="M15 16 L22 23" stroke="#111" stroke-width="3.5" stroke-linecap="round"/></svg>
 <svg class="ic" style="left:13.0px;top:453.2px" width="26" height="26" viewBox="0 0 26 26"><circle cx="13" cy="3.5" r="2" fill="#fff" stroke="#111" stroke-width="1"/><path d="M10 7 Q13 5.5 16 7 L17 15 L15.5 15 L15.5 21 L10.5 21 L10.5 15 L9 15 Z" fill="#fff" stroke="#111" stroke-width="1.3"/><path d="M11 9 L11 15 M15 9 L15 15" stroke="#111" stroke-width="1"/><path d="M8 24 L13 20 L18 24" stroke="#e02020" stroke-width="1.5" fill="none"/></svg>
 <svg class="ic" style="left:13.0px;top:487.3px" width="26" height="26" viewBox="0 0 26 26"><path d="M2 13 Q13 3 24 12 Q13 21 2 13 Z" fill="#fff" stroke="#111" stroke-width="1.5"/><circle cx="12.5" cy="12.5" r="4.2" fill="#111"/><circle cx="11.5" cy="11.5" r="1.3" fill="#fff"/><path d="M3 9 Q13 1 23 8" stroke="#111" stroke-width="1.6" fill="none"/><path d="M5 17 Q13 22 21 17" stroke="#999" stroke-width="1.5" fill="none"/></svg>
 <svg class="ic" style="left:13.0px;top:521.3px" width="26" height="26" viewBox="0 0 26 26"><ellipse cx="8" cy="11" rx="3.5" ry="6" fill="#111" transform="rotate(-8 8 11)"/><ellipse cx="8.5" cy="20.5" rx="2.5" ry="3" fill="#111"/><ellipse cx="18" cy="7" rx="3.5" ry="5.5" fill="#111" transform="rotate(12 18 7)"/><ellipse cx="16" cy="17" rx="2.5" ry="3" fill="#111"/></svg>
 <svg class="ic" style="left:13.0px;top:567.5px" width="26" height="26" viewBox="0 0 26 26"><path d="M3 4 L9 2.5 L16 4 L23 3 L23 22 L16 23 L9 21.5 L3 23 Z" fill="#88b858" stroke="#111" stroke-width="1.3"/><path d="M16 4 L23 3 L23 22 L16 23 Z" fill="#e8d8c0"/><path d="M9 16 L21 5 M10 19 L22 17" stroke="#f0e040" stroke-width="2"/><path d="M4 18 Q9 20 14 22" stroke="#2a58b0" stroke-width="2" fill="none"/><path d="M9 2.5 L9 21.5 M16 4 L16 23" stroke="#333" stroke-width=".8"/></svg>
 <svg class="ic" style="left:13.0px;top:602.5px" width="26" height="26" viewBox="0 0 26 26"><path d="M2 8 L13 4 L23 12 L12 23 Z" fill="#d8d8d8" stroke="#aaa" stroke-width="1"/><path d="M5 11 L14 7.5 L23.5 14.5 L12 20 Z" fill="#e8e8e8" stroke="#b0b0b0" stroke-width=".8"/></svg>
 <svg class="ic" style="left:13.0px;top:636.2px" width="26" height="26" viewBox="0 0 26 26"><circle cx="12" cy="4.5" r="2.8" fill="#d0d0d0" stroke="#aaa"/><path d="M9 8 L15 8 L15.5 17 L8.5 17 Z" fill="#d8d8d8" stroke="#aaa"/><path d="M4 20 Q12 15 21 22 L18 24 Q12 20 6 22 Z" fill="#d0d0d0" stroke="#aaa"/></svg>
 <svg class="ic" style="left:13.0px;top:669.7px" width="26" height="26" viewBox="0 0 26 26"><circle cx="12" cy="12" r="10.5" fill="#1e62c0" stroke="#111" stroke-width="1.4"/><path d="M3 10 Q10 4 21 7 Q14 7 9 12 Q6 14 3 14 Z" fill="#fff"/><path d="M4 17 Q10 14 16 16" stroke="#fff" stroke-width="2" fill="none"/><path d="M9 16 L17 16 L17 13 L24 18 L17 23 L17 20 L9 20 Z" fill="#3a9ae8" stroke="#111" stroke-width="1"/></svg>
 <svg class="ic" style="left:13.0px;top:714.0px" width="26" height="26" viewBox="0 0 26 26"><path d="M2 12 L6 9 L20 6 L24 11 L19 22 L7 24 Z" fill="#8a8a80" stroke="#111" stroke-width="1.1"/><path d="M6 8 L15 4.5 L21 8 L19.5 17 L10.5 20.5 L7.5 17 Z" fill="#d01818" stroke="#111" stroke-width="1"/><path d="M9 10 L15 8 L18 10 M9.5 13.5 L13.5 12.5 M10 17 L12 16.5" stroke="#fff" stroke-width="1.5" fill="none"/></svg>
 <svg class="ic" style="left:12.8px;top:754.0px" width="26" height="26" viewBox="0 0 26 26"><path d="M12.5 1 L25.3 13.9 L12.5 24.6 Z" fill="#000"/><circle cx="12.5" cy="13.9" r="8.2" fill="#fff" stroke="#000" stroke-width="1.3"/><path d="M0.3 13.9 L25 13.9" stroke="#000" stroke-width="1.4"/><text x="10.3" y="11.8" font-size="5" font-family="Liberation Sans" font-weight="bold" fill="#222">C</text><text x="9" y="19.5" font-size="4.5" font-family="Liberation Sans" font-weight="bold" fill="#222">ao</text></svg>
 <svg class="ic" style="left:13.0px;top:794.0px" width="26" height="26" viewBox="0 0 26 26"><path d="M3 10 L9 4 L19 4 L24 9 L24 17 L19 23 L9 23 L3 19 Z" fill="#f2b818" stroke="#111" stroke-width="1.2"/><path d="M3 10 Q9 12 13 12 Q19 12 24 9 L24 17 L19 23 L9 23 L3 19 Z" fill="#8a8070"/><path d="M9 4 L19 4 L21 8 Q13 11 6 8 Z" fill="#e8c8a0"/><path d="M10 12 Q10 15 13 15 Q16 15 16 12 L16 23 L10 23 Z" fill="#f2b818" stroke="#111" stroke-width="1"/><path d="M3 10 L10 12 M16 12 L24 9" stroke="#111" stroke-width="1.1"/></svg>
 <svg class="ic" style="left:50.6px;top:102.0px" width="26" height="26" viewBox="0 0 26 26"><rect x="5" y="3.5" width="16" height="19.5" fill="#a4a292" stroke="#333" stroke-width="1.6"/><path d="M5.5 22.5 L20.5 4" stroke="#e01818" stroke-width="1.4"/><circle cx="5.5" cy="22.5" r="2.2" fill="#e01818"/><circle cx="20.5" cy="4" r="2.2" fill="#e01818"/></svg>
 <svg class="ic" style="left:50.6px;top:136.0px" width="26" height="26" viewBox="0 0 26 26"><path d="M3 23 L7 16 L20 3 Q22 1.5 24 3.5 Q25 5.5 23 7 L10 20 Z" fill="#d01818" stroke="#111" stroke-width="1.1"/><path d="M3 23 L7 16 L10 20 Z" fill="#e8d8b8" stroke="#111" stroke-width=".8"/><path d="M3 23 L4.8 19.8 L6.2 21.2 Z" fill="#111"/><path d="M8 18 L21 5" stroke="#ff8080" stroke-width=".8"/></svg>
 <svg class="ic" style="left:50.6px;top:169.8px" width="26" height="26" viewBox="0 0 26 26"><circle cx="13" cy="13" r="11" fill="#a4a292" stroke="#333" stroke-width="1.6"/><path d="M13 13 L20 6" stroke="#e01818" stroke-width="1.4"/><circle cx="13" cy="13" r="2.2" fill="#e01818"/><circle cx="20" cy="6" r="2.2" fill="#e01818"/></svg>
 <svg class="ic" style="left:50.6px;top:203.5px" width="26" height="26" viewBox="0 0 26 26"><path d="M5.5 22 Q0 10 11 5 Q19 2 22.5 7" fill="none" stroke="#111" stroke-width="1.8"/><path d="M5.5 22 L22.5 7 M6 7 L14 15" stroke="#e01818" stroke-width="1.3"/><circle cx="5.5" cy="22" r="2.2" fill="#e01818"/><circle cx="22.5" cy="7" r="2.2" fill="#e01818"/><circle cx="6" cy="7" r="2" fill="#e01818"/></svg>
 <svg class="ic" style="left:50.6px;top:237.5px" width="26" height="26" viewBox="0 0 26 26"><circle cx="13" cy="12" r="11" fill="none" stroke="#e01818" stroke-width="1.2"/><path d="M8 3.5 L19 2.5 L23 12 L16 22 L6 20 L3 10 Z" fill="#a4a292" stroke="#111" stroke-width="1.6"/><path d="M13 12 L19 3" stroke="#e01818" stroke-width="1.4"/><circle cx="13" cy="12" r="2.2" fill="#e01818"/><circle cx="19" cy="3" r="2.2" fill="#e01818"/></svg>
 <svg class="ic" style="left:50.6px;top:271.3px" width="26" height="26" viewBox="0 0 26 26"><path d="M2.5 23 Q2 15 8 16 Q14 17 18 19 Q23 19 21 14 Q18 10 10 10 Q4 8 7 5 Q10 3 16 5 Q22 6 22 2" fill="none" stroke="#b01818" stroke-width="1.5"/><circle cx="2.5" cy="23" r="2.2" fill="#e01818"/><circle cx="21.5" cy="2.5" r="2" fill="#e01818"/></svg>
 <svg class="ic" style="left:50.6px;top:317.5px" width="26" height="26" viewBox="0 0 26 26"><path d="M13 1 L18 6 L15 6 L15 11 L20 11 L20 8 L25 13 L20 18 L20 15 L15 15 L15 20 L18 20 L13 25 L8 20 L11 20 L11 15 L6 15 L6 18 L1 13 L6 8 L6 11 L11 11 L11 6 L8 6 Z" fill="#e01818"/><path d="M11 11 L15 11 L15 15 L11 15 Z" fill="#fff"/><path d="M9 9 L17 17 M17 9 L9 17" stroke="#fff" stroke-width="1.2"/></svg>
 <svg class="ic" style="left:50.6px;top:351.5px" width="26" height="26" viewBox="0 0 26 26"><path d="M1 16 L10 10 L25 14 L16 21 Z" fill="#a4a292" stroke="#111" stroke-width="1.3"/><path d="M1 16 L1 19 L16 24 L25 17 L25 14 L16 21 Z" fill="#6a6858" stroke="#111" stroke-width="1"/><path d="M13 1.5 L19 8 L15.5 8 L15.5 16 L10.5 16 L10.5 8 L7 8 Z" fill="#e01818" stroke="#600" stroke-width=".8"/></svg>
 <svg class="ic" style="left:50.6px;top:385.7px" width="26" height="26" viewBox="0 0 26 26"><path d="M4 11 Q5 4 13 3.5 Q18 3.5 20.5 6 L22.5 3 L23 11 L15.5 10 L17.5 8 Q15.5 7 13 7 Q8.5 7.5 7.5 11 Z" fill="#e01818" stroke="#600" stroke-width=".8"/><path d="M22 15 Q21 22 13 22.5 Q8 22.5 5.5 20 L3.5 23 L3 15 L10.5 16 L8.5 18 Q10.5 19 13 19 Q17.5 18.5 18.5 15 Z" fill="#e01818" stroke="#600" stroke-width=".8"/></svg>
 <svg class="ic" style="left:50.6px;top:419.3px" width="26" height="26" viewBox="0 0 26 26"><path d="M3 20 Q0 8 12 4 Q22 2 24 9 Q20 6 13 8 Q6 11 9 20 Z" fill="#9a9888" stroke="#111" stroke-width="1.2"/><path d="M9 20 Q7 12 14 11 Q19 10 21 14 L23 12 L22 20 L15 18 L17 16 Q15 14 13 15 Q10 17 12 21 Z" fill="#e02818" stroke="#111" stroke-width=".9"/><path d="M12 21 L18 20 L16 23 Z" fill="#f08020"/></svg>
 <svg class="ic" style="left:50.6px;top:453.3px" width="26" height="26" viewBox="0 0 26 26"><rect x="2" y="3" width="21" height="20" fill="#fff" stroke="#e01818" stroke-width="1.6"/><rect x="3.5" y="8" width="14" height="13.5" fill="#a4a292" stroke="#111" stroke-width="1.4"/><path d="M10 14 L17.5 6.5 L15 4 L24 2 L22 11 L19.5 8.5 L12.5 16 Z" fill="#e01818" stroke="#111" stroke-width=".9"/></svg>
 <svg class="ic" style="left:50.6px;top:487.3px" width="26" height="26" viewBox="0 0 26 26"><path d="M2 7 Q12 -1 22 7 Q26 14 21 23" fill="none" stroke="#e01818" stroke-width="1.8"/><path d="M7 15 Q9 8 15 8" fill="none" stroke="#111" stroke-width="1.8"/><path d="M18 15 Q18 19 14 22" fill="none" stroke="#111" stroke-width="1.8"/><path d="M10 13 L16.5 7 L14 5 L22 3.5 L20.5 11 L18.5 9 L12.5 15.5 Z" fill="#e01818" stroke="#111" stroke-width=".9"/></svg>
 <svg class="ic" style="left:50.6px;top:534.0px" width="26" height="26" viewBox="0 0 26 26"><path d="M2 21 L13 16 L14.5 19 L4 24 Z" fill="#f0d020" stroke="#111" stroke-width="1"/><circle cx="2.8" cy="22.5" r="1.6" fill="#111"/><path d="M10 9 Q11 3 17 2 Q23 2 24 7 Q24.5 13 19 17 L13 18 Q9 16 10 9 Z" fill="#d8d8c8" stroke="#111" stroke-width="1.2"/><ellipse cx="17.5" cy="10" rx="5" ry="6" fill="#f0d020" stroke="#111" stroke-width="1"/><ellipse cx="18" cy="10" rx="2.8" ry="3.8" fill="#f8e020"/></svg>
 <svg class="ic" style="left:50.6px;top:567.5px" width="26" height="26" viewBox="0 0 26 26"><path d="M3 9 L9 13 M19 3 L16 7.5 M6 11 L21 22 M12 10 L25 19" stroke="#111" stroke-width="1.3"/><path d="M5 16 L17 6" stroke="#111" stroke-width="1.3"/><path d="M3 13 L7 19 M14 4 L19 9" stroke="#111" stroke-width="1.5"/><circle cx="21" cy="22" r="1.4" fill="#e01818"/><circle cx="24.5" cy="18.5" r="1.4" fill="#e01818"/><text x="6" y="11" font-size="8" font-family="Liberation Sans" fill="#111" transform="rotate(-40 9 9)">3</text></svg>
 <svg class="ic" style="left:50.6px;top:601.0px" width="26" height="26" viewBox="0 0 26 26"><path d="M3 20 Q4 9 13 5 Q20 2 25 4 Z" fill="#f0e030" stroke="#111" stroke-width="1.3"/><path d="M8 16 Q9 11 13 9 Q15.5 8 17 8 Z" fill="#f0f0f0" stroke="#111" stroke-width="1"/><path d="M3 20 L5 23 L25 4" stroke="#111" stroke-width="1.3" fill="#f0e030"/></svg>
 <svg class="ic" style="left:50.6px;top:636.2px" width="26" height="26" viewBox="0 0 26 26"><rect x="10" y="2" width="15" height="12" fill="#fff" stroke="#111" stroke-width="1.3"/><text x="11.5" y="11.5" font-size="8.5" font-family="Liberation Mono" fill="#111">A1</text><path d="M10 8 L5 8 L5 19" fill="none" stroke="#111" stroke-width="1.3"/><path d="M2 18 L8 18 L5 23.5 Z" fill="#111"/></svg>
 <svg class="ic" style="left:50.6px;top:669.7px" width="26" height="26" viewBox="0 0 26 26"><path d="M13 13 L13 25" stroke="#2a58c8" stroke-width="1.6" stroke-dasharray="1.5 1.2"/><path d="M13 13 L4 7.5" stroke="#e01818" stroke-width="1.5" stroke-dasharray="1.5 1.2"/><path d="M13 13 L3 18" stroke="#18a030" stroke-width="1.5" stroke-dasharray="1.5 1.2"/><path d="M13 13 L13 5" stroke="#2a58c8" stroke-width="2"/><path d="M10 6 L13 1 L16 6 Z" fill="#2a58c8"/><path d="M13 13 L21 8" stroke="#18a030" stroke-width="2"/><path d="M19 5.5 L24.5 5 L22 10 Z" fill="#18a030"/><path d="M13 13 L21 19" stroke="#e01818" stroke-width="2"/><path d="M19 21.5 L24.5 22.5 L22.5 17 Z" fill="#e01818"/><circle cx="13" cy="13" r="2.3" fill="#111"/></svg>
 <svg class="ic" style="left:50.6px;top:703.5px" width="26" height="26" viewBox="0 0 26 26"><path d="M6 20 L13 2 L17 2 L23 20 L19 23 L15.5 13 L11 13 L9 19 Z" fill="#a4a292" stroke="#111" stroke-width="1.2"/><path d="M11 13 L15.5 13 L13.5 7 Z" fill="#f0f0f0" stroke="#111" stroke-width=".8"/><path d="M3 18 L9 19 M19 23 L24 22" stroke="#111" stroke-width="1.5"/></svg>
 <svg class="ic" style="left:50.6px;top:749.8px" width="26" height="26" viewBox="0 0 26 26"><path d="M3 8 L11 3 L19 5 L23 14 L13 23 L5 19 Z" fill="#c8b8a8" stroke="#111" stroke-width="1.3"/><path d="M5 12 Q10 7 15 11 Q19 15 22 13 M6 16 Q11 12 14 15 Q16 18 18 18" stroke="#c02828" stroke-width="1.2" fill="none"/><path d="M10 8 Q16 6 20 9" stroke="#c02828" stroke-width="1" fill="none"/></svg>
 <svg class="ic" style="left:50.6px;top:784.0px" width="26" height="26" viewBox="0 0 26 26"><path d="M4 7 L19 3 L24 16 L9 23 Z" fill="#a4a292" stroke="#111" stroke-width="1.3"/><path d="M9 6 L13.5 21 M14 4.5 L19 19 M6 12 L21 7.5 M7.5 17.5 L22.5 12" stroke="#555" stroke-width="1"/><circle cx="4" cy="7" r="2" fill="#e01818"/><circle cx="19" cy="3" r="2" fill="#e01818"/><circle cx="9" cy="23" r="2" fill="#e01818"/></svg>

 <div id="status">
  <div class="abs" style="left:92px;top:10px;width:1px;height:9px;background:#8a8a8a"></div>
  <div class="stt" style="left:133px">Výběr objektů. Shift pro výběr s přesahem. Tažení myši pro vícenásobný výběr.</div>
  <div class="abs" style="left:746px;top:10px;width:1px;height:9px;background:#8a8a8a"></div>
  <div class="stt" style="left:757px">Pole hodnot</div>
  <div class="abs" style="left:838px;top:2px;width:199px;height:24px;border:1px solid #abb6c6;background:#f0f0f0"></div>
 </div>
 <svg class="ic" style="left:8px;top:822px" width="120" height="24" viewBox="0 0 120 24">
  <defs>
   <radialGradient id="cream" cx=".65" cy=".65" r=".7"><stop offset="0" stop-color="#fbf8f0"/><stop offset="1" stop-color="#e2d2a8"/></radialGradient>
   <radialGradient id="bluew" cx=".6" cy=".65" r=".7"><stop offset="0" stop-color="#fff"/><stop offset=".6" stop-color="#e8f0f8"/><stop offset="1" stop-color="#8ab0d8"/></radialGradient>
  </defs>
  <circle cx="11.8" cy="11.8" r="8.8" fill="url(#cream)" stroke="#7a5418" stroke-width="2.2"/>
  <path d="M11.8 5.5 Q15 6 14.5 9.5 Q14 11.5 12.5 12.5 L12.5 18 L11 18 L11 12.5 Q9.5 11.5 9.2 9.5 Q9 6 11.8 5.5 Z" fill="#eaa898"/>
  <path d="M11.1 12.5 L11.1 18 L12.5 18 L12.5 12.5" fill="#b0a898"/>
  <circle cx="41.8" cy="11.8" r="8.8" fill="url(#cream)" stroke="#7a5418" stroke-width="2.2"/>
  <circle cx="41.8" cy="6.5" r="1.3" fill="#8a8a80"/><path d="M40 8.5 L43.6 8.5 L43.8 13.5 L43 13.5 L43 18.5 L40.6 18.5 L40.6 13.5 L39.8 13.5 Z" fill="#8a8a80"/>
  <circle cx="71.8" cy="11.8" r="8.8" fill="url(#cream)" stroke="#7a5418" stroke-width="2.2"/>
  <text x="66" y="16.8" font-family="Liberation Serif" font-size="14" fill="#7a7a70">G</text>
  <circle cx="105.8" cy="11.8" r="8.8" fill="url(#bluew)" stroke="#1a4670" stroke-width="2.2"/>
  <text x="101.2" y="17" font-family="Liberation Sans" font-weight="bold" font-size="14" fill="#000">?</text>
 </svg>
 <svg class="ic" style="left:1056px;top:835px" width="10" height="12" viewBox="0 0 10 12"><g fill="#b4b4b4"><rect x="7" y="2" width="2" height="2"/><rect x="4" y="5" width="2" height="2"/><rect x="7" y="5" width="2" height="2"/><rect x="1" y="8" width="2" height="2"/><rect x="4" y="8" width="2" height="2"/><rect x="7" y="8" width="2" height="2"/></g></svg>


 <!-- context menu -->
 <div class="menu" style="left:398px;top:257px;width:217px;height:360px">
  <div class="gut" style="left:29px"></div>
  <div class="it" style="top:6px">Informace o prvku</div>
  <div class="it" style="top:28px">Smazat</div>
  <div class="it" style="top:50px">Skrýt</div>
  <div class="sep" style="left:30px;right:2px;top:72px"></div>
  <div class="it" style="top:80px">Vybrat</div><div class="arr" style="left:200px;top:84px"></div>
  <div class="it" style="top:102px">Výměra</div><div class="arr" style="left:200px;top:106px"></div>
  <div class="it" style="top:124px">Průnik</div><div class="arr" style="left:200px;top:128px"></div>
  <div class="it" style="top:146px">Zarovnat pohled</div>
  <div class="it" style="top:168px">Zarovnat osy</div>
  <div class="it" style="top:190px">Revers ploch</div>
  <div class="it" style="top:212px">Orientace ploch</div>
  <div class="it" style="top:234px">Lupa hranice</div>
  <div class="hl" style="left:2px;right:2px;top:252px"></div>
  <div class="it" style="top:256px">Textura</div><div class="arr" style="left:200px;top:260px"></div>
  <div class="sep" style="left:30px;right:2px;top:278px"></div>
  <div class="it" style="top:286px">Vytvořit unikátní texturu</div>
  <div class="it" style="top:308px">Střed v osách XYZ</div>
  <div class="sep" style="left:30px;right:2px;top:330px"></div>
  <div class="it" style="top:338px">Add Photo Texture</div>
 </div>
 <div class="menu" style="left:609px;top:507px;width:220px;height:102px">
  <div class="gut" style="left:29px"></div>
  <div class="hl" style="left:2px;right:2px;top:3px"></div>
  <div class="it" style="top:7px">Pozice</div>
  <div class="it" style="top:29px">Obnovit pozici</div>
  <div class="sep" style="left:30px;right:2px;top:51px"></div>
  <div class="it" style="top:59px">Projekční</div>
  <div class="it" style="top:81px">Upravit obrázek textury...</div>
 </div>
 <svg class="ic" style="left:681px;top:518px" width="14" height="21" viewBox="0 0 14 21"><path d="M1.5 1.5 L1.5 17.5 L5.5 13.5 L8.5 19.5 L10.5 18.5 L7.5 12.5 L12.5 12.5 Z" fill="#fff" stroke="#000" stroke-width="1" stroke-linejoin="miter"/></svg>
</div>
</body></html>
